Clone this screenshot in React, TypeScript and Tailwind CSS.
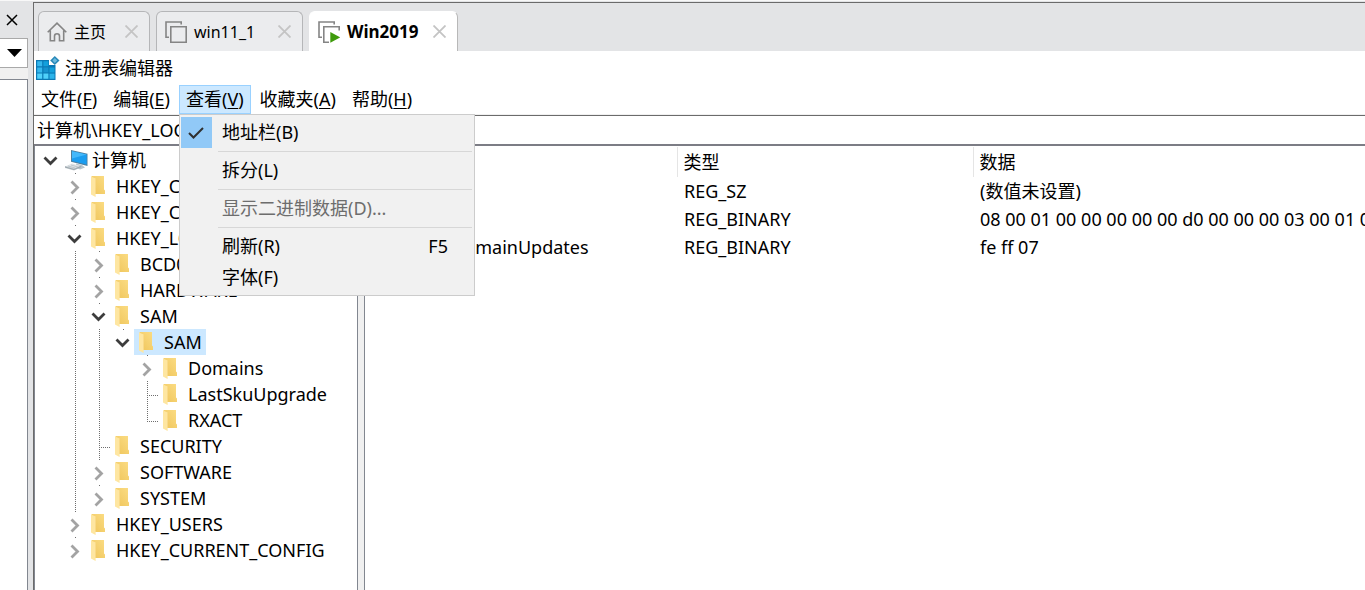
import React from "react";

type Guide = "none" | "line" | "closed" | "open" | "tee" | "elbow";

interface TreeItem {
  label: string;
  guides: Guide[];
  icon?: "computer" | "folder";
  selected?: boolean;
}

const treeItems: TreeItem[] = [
  { label: "计算机", guides: ["open"], icon: "computer" },
  { label: "HKEY_CLASSES_ROOT", guides: ["none", "closed"] },
  { label: "HKEY_CURRENT_USER", guides: ["none", "closed"] },
  { label: "HKEY_LOCAL_MACHINE", guides: ["none", "open"] },
  { label: "BCD00000000", guides: ["none", "line", "closed"] },
  { label: "HARDWARE", guides: ["none", "line", "closed"] },
  { label: "SAM", guides: ["none", "line", "open"] },
  { label: "SAM", guides: ["none", "line", "line", "open"], selected: true },
  { label: "Domains", guides: ["none", "line", "line", "none", "closed"] },
  { label: "LastSkuUpgrade", guides: ["none", "line", "line", "none", "tee"] },
  { label: "RXACT", guides: ["none", "line", "line", "none", "elbow"] },
  { label: "SECURITY", guides: ["none", "line", "tee"] },
  { label: "SOFTWARE", guides: ["none", "line", "closed"] },
  { label: "SYSTEM", guides: ["none", "line", "closed"] },
  { label: "HKEY_USERS", guides: ["none", "closed"] },
  { label: "HKEY_CURRENT_CONFIG", guides: ["none", "closed"] },
];

const values = [
  { name: "(默认)", type: "REG_SZ", data: "(数值未设置)" },
  {
    name: "C",
    type: "REG_BINARY",
    data: "08 00 01 00 00 00 00 00 d0 00 00 00 03 00 01 00",
  },
  { name: "ServerDomainUpdates", type: "REG_BINARY", data: "fe ff 07" },
];

const CloseIcon: React.FC = () => (
  <svg width="13" height="13" viewBox="0 0 13 13" fill="none">
    <path d="M0.5 0.5 12.5 12.5M12.5 0.5 0.5 12.5" stroke="#c4c4c4" strokeWidth="1.8" />
  </svg>
);

const HomeIcon: React.FC = () => (
  <svg width="20" height="20" viewBox="0 0 20 20" fill="none" stroke="#858585" strokeWidth="1.6">
    <path d="M0.7 10.2 10 1.2l9.3 9M3.3 8.5v10.3h4.2v-4.6a2.5 2.5 0 0 1 5 0v4.6h4.2V8.5" />
  </svg>
);

const MachineIcon: React.FC<{ running?: boolean }> = ({ running }) => (
  <svg width="22" height="22" viewBox="0 0 22 22" fill="none">
    <path d="M4 16.2H1V1h15.2v2.6" stroke="#858585" strokeWidth="1.6" />
    <path d="M5.8 5.8h15.4v15.4H5.8z" stroke="#858585" strokeWidth="1.6" />
    {running && (
      <>
        <path d="M11 9.5h11V22H11z" fill="#fff" />
        <path d="M12.3 11 22.3 16.3 12.3 21.8z" fill="#3f9b0c" />
      </>
    )}
  </svg>
);

const RegistryIcon: React.FC = () => (
  <svg width="24" height="24" viewBox="0 0 24 24">
    <path d="M0 4h13v5h6.500v15H0z" fill="#0b79b5" />
    <path d="M1.2 5.2h5v5h-5zM1.2 11.400h5v5h-5z" fill="#35b8ee" />
    <path d="M7.4 5.2h5v5h-5zM13.500 11.400h5v5h-5z" fill="#13a0dc" />
    <path d="M7.4 11.400h5v5h-5z" fill="#1793cf" />
    <path d="M1.2 17.600h5v5.200h-5zM7.4 17.600h5v5.200h-5z" fill="#4fd0fa" />
    <path d="M13.500 17.600h5v5.200h-5z" fill="#2cb4ea" />
    <path d="M18.8 0 23.5 4.5 18.8 9 14.2 4.5z" fill="#2788b8" />
    <path d="M18.8 2 21.300 4.5 18.8 7 16.400 4.5z" fill="#6cbade" />
  </svg>
);

const ComputerIcon: React.FC = () => (
  <svg width="24" height="24" viewBox="0 0 24 24">
    <path d="M6 2 22.5 5.8V18L6 13.8z" fill="#4d7f9f" />
    <path d="M7 3.2 21.7 6.6v10L7 13z" fill="#1b9df0" />
    <path d="M7 3.2 21.7 6.6 7 10.5z" fill="#43b8fb" />
    <path d="M11 15.5 17 17l3 2.5-5 2-4-2z" fill="#b9c6cd" />
    <path d="M0 18.5 7 15.5 16 18 9 21z" fill="#dfe4e7" />
    <path d="M0 18.5 9 21l7-3v1l-7 3-9-2.5zM3 18l7 2M6 17l7 2" fill="#8e9aa1" stroke="#a8b2b8" strokeWidth="0.6" />
  </svg>
);

const FolderIcon: React.FC = () => (
  <svg width="24" height="24" viewBox="0 0 24 24">
    <defs>
      <linearGradient id="folder-back" x1="0" x2="1" y1="1" y2="0">
        <stop offset="0" stopColor="#efc55b" />
        <stop offset="1" stopColor="#fbdc83" />
      </linearGradient>
    </defs>
    <path d="M2.5 2H15v13.5l1 1V20H5z" fill="url(#folder-back)" />
    <path d="M2 2.5 6.6 4.500v18.500L2 20.500z" fill="#fee6a1" />
    <path d="M6.6 4.500v15" stroke="#f9d987" strokeWidth="0.6" />
  </svg>
);

const GuideCell: React.FC<{ kind: Guide; root?: boolean }> = ({ kind, root }) => (
  <svg width="24" height="26" viewBox="0 0 24 26" fill="none" className="shrink-0">
    {(kind === "line" || kind === "tee") && (
      <path d="M13.5 0V26" stroke="#6e6e6e" strokeDasharray="1 1" />
    )}
    {kind === "elbow" && <path d="M13.5 0V14" stroke="#6e6e6e" strokeDasharray="1 1" />}
    {(kind === "tee" || kind === "elbow") && (
      <path d="M13 14.5h12" stroke="#6e6e6e" strokeDasharray="1 1" />
    )}
    {(kind === "closed" || kind === "open") && !root && (
      <path d="M13 0.5h1" stroke="#6e6e6e" />
    )}
    {kind === "closed" && <path d="M9.5 8.5 15.5 14.5 9.5 20.5" stroke="#a3a3a3" strokeWidth="2.8" />}
    {kind === "open" && <path d="M6.5 10.5 12.5 16.5 18.5 10.5" stroke="#3d3d3d" strokeWidth="2.8" />}
  </svg>
);

const Tab: React.FC<{
  label: string;
  icon: React.ReactNode;
  active?: boolean;
  className: string;
}> = ({ label, icon, active, className }) => (
  <div
    className={`flex items-center rounded-t-md border border-b-0 pr-[11px] pl-2 ${
      active ? "border-white border-r-[#b8b8b8] bg-white" : "border-[#b5b6b8] bg-[#ebecee]"
    } ${className}`}
  >
    <button className="flex items-center gap-[7px] whitespace-nowrap">
      {icon}
      {label}
    </button>
    <button aria-label={`关闭 ${label}`} className="ml-auto">
      <CloseIcon />
    </button>
  </div>
);

const MenuButton: React.FC<{ label: string; hotkey: string; open?: boolean }> = ({
  label,
  hotkey,
  open,
}) => (
  <button
    className={`h-[29px] border px-1.5 pb-0.5 whitespace-nowrap ${
      open ? "border-[#99d1ff] bg-[#cce8ff]" : "border-transparent"
    }`}
  >
    {label}(<span className="underline underline-offset-2">{hotkey}</span>)
  </button>
);

const MenuItem: React.FC<{
  label: string;
  shortcut?: string;
  checked?: boolean;
  disabled?: boolean;
}> = ({ label, shortcut, checked, disabled }) => (
  <button
    role="menuitem"
    disabled={disabled}
    className="flex h-[31px] w-full items-center pr-6 text-left disabled:text-[#6d6d6d]"
  >
    <span
      className={`mr-2.5 flex size-[31px] items-center justify-center ${checked ? "bg-[#91c9f7]" : ""}`}
    >
      {checked && (
        <svg width="16" height="12" viewBox="0 0 16 12" fill="none">
          <path d="M1 6 5.5 10.5 15 1" stroke="#303030" strokeWidth="2" />
        </svg>
      )}
    </span>
    <span className="pb-0.5">{label}</span>
    {shortcut && <span className="ml-auto pb-0.5">{shortcut}</span>}
  </button>
);

const MenuSeparator: React.FC = () => (
  <div role="separator" className="my-[3px] ml-[37px] h-px bg-[#d7d7d7]" />
);

const Sidebar: React.FC = () => (
  <aside className="flex w-7 shrink-0 flex-col bg-[#f0f0f0]">
    <div className="flex h-[37px] items-center bg-[#e3e4e6] pl-1.5">
      <button aria-label="关闭侧栏">
        <svg width="12" height="12" viewBox="0 0 12 12" fill="none">
          <path d="M1 1 11 11M11 1 1 11" stroke="#000" strokeWidth="1.5" />
        </svg>
      </button>
    </div>
    <div className="relative h-[30px]">
      <select
        aria-label="筛选"
        className="h-full w-full appearance-none border border-l-0 border-[#a9a9a9] bg-white"
      />
      <svg
        width="16"
        height="8"
        viewBox="0 0 16 8"
        className="pointer-events-none absolute top-[11px] left-[7px]"
      >
        <path d="M0 0h15L7.5 8z" fill="#000" />
      </svg>
    </div>
    <div className="mt-[11px] flex-1 border-t border-r border-[#828790] bg-white" />
  </aside>
);

const TreePane: React.FC = () => (
  <ul className="w-[323px] shrink-0 border-r border-[#828790] bg-white pt-px pl-[3px]">
    {treeItems.map((item, i) => (
      <li key={i} className="flex h-[26px] items-center whitespace-nowrap">
        {item.guides.map((guide, level) => (
          <GuideCell key={level} kind={guide} root={level === 0} />
        ))}
        <span
          className={`flex h-full items-center gap-[3px] pr-1 pl-[3px] ${
            item.selected ? "bg-[#cce8ff]" : ""
          }`}
        >
          {item.icon === "computer" ? <ComputerIcon /> : <FolderIcon />}
          {item.label}
        </span>
      </li>
    ))}
  </ul>
);

const ValueTable: React.FC = () => (
  <div className="min-w-0 flex-1 overflow-hidden border-l border-[#828790] bg-white pt-px">
    <table className="w-full table-fixed text-left whitespace-nowrap">
      <colgroup>
        <col className="w-[312px]" />
        <col className="w-[296px]" />
        <col />
      </colgroup>
      <thead>
        <tr className="h-[30px]">
          <th className="border-r border-[#e5e5e5] pl-1.5 font-normal">名称</th>
          <th className="border-r border-[#e5e5e5] pl-1.5 font-normal">类型</th>
          <th className="pl-1.5 font-normal">数据</th>
        </tr>
      </thead>
      <tbody>
        {values.map((value) => (
          <tr key={value.name} className="h-7">
            <td className="pl-8">{value.name}</td>
            <td className="pl-[7px]">{value.type}</td>
            <td className="pl-[7px]">{value.data}</td>
          </tr>
        ))}
      </tbody>
    </table>
  </div>
);

const App: React.FC = () => {
  return (
    <div className="flex h-screen gap-[5px] overflow-hidden border-t border-[#f8f8f8] bg-[#e3e4e6] font-['Noto_Sans','Noto_Sans_CJK_SC',sans-serif] text-[18px] leading-6 text-black">
      <Sidebar />

      <div className="mt-px flex min-w-0 flex-1 flex-col border-t border-l border-[#6b6b6b]">
        <nav className="flex h-12 shrink-0 gap-1.5 pt-2 pl-1 text-[16px]">
          <Tab label="主页" icon={<HomeIcon />} className="w-[112px]" />
          <Tab label="win11_1" icon={<MachineIcon />} className="w-[147px]" />
          <Tab
            label="Win2019"
            icon={<MachineIcon running />}
            active
            className="w-[149px] text-[17px] font-bold"
          />
        </nav>

        <div className="flex min-h-0 flex-1 flex-col bg-white">
          <header className="flex h-[34px] shrink-0 items-center gap-[5px] pl-0.5">
            <RegistryIcon />
            <h1>注册表编辑器</h1>
          </header>

          <div className="flex h-[30px] shrink-0 gap-0.5 border-b border-[#f0f0f0]">
            <MenuButton label="文件" hotkey="F" />
            <MenuButton label="编辑" hotkey="E" />
            <div className="relative">
              <MenuButton label="查看" hotkey="V" open />
              <div
                role="menu"
                className="absolute top-[29px] left-0 z-10 w-[296px] border border-[#ccc] bg-[#f1f1f1] py-0.5 pr-0.5 pl-px"
              >
                <MenuItem label="地址栏(B)" checked />
                <MenuSeparator />
                <MenuItem label="拆分(L)" />
                <MenuSeparator />
                <MenuItem label="显示二进制数据(D)..." disabled />
                <MenuSeparator />
                <MenuItem label="刷新(R)" shortcut="F5" />
                <MenuItem label="字体(F)" />
              </div>
            </div>
            <MenuButton label="收藏夹" hotkey="A" />
            <MenuButton label="帮助" hotkey="H" />
          </div>

          <input
            aria-label="地址栏"
            defaultValue="计算机\HKEY_LOCAL_MACHINE\SAM\SAM"
            className="h-[31px] shrink-0 border-t border-b-2 border-t-[#6b6b6b] border-b-[#7c7d85] bg-white pb-0.5 pl-[3px] outline-none"
          />

          <div className="flex min-h-0 flex-1 gap-1.5 border-l border-[#828790] bg-[#f0f0f0]">
            <TreePane />
            <ValueTable />
          </div>
        </div>
      </div>
    </div>
  );
};

export default App;
